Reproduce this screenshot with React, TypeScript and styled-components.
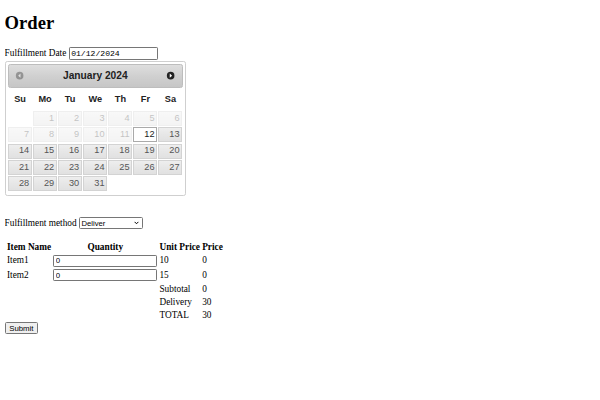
import React from 'react';
import styled, { createGlobalStyle } from 'styled-components';

const GlobalStyle = createGlobalStyle`
  body {
    margin: 4.6px;
    background: #fff;
    color: #000;
    font-family: 'Liberation Serif', 'Times New Roman', serif;
    font-size: 9.3px;
  }
`;

const Heading = styled.h1`
  margin: 7.6px 0 12.4px;
  font-size: 18.6px;
  font-weight: bold;
`;

const FieldRow = styled.div<{ $gap?: number }>`
  margin-top: ${({ $gap }) => $gap ?? 0}px;
  line-height: 12.6px;
`;

const TextInput = styled.input<{ $width: number; $mono?: boolean }>`
  box-sizing: border-box;
  width: ${({ $width }) => $width}px;
  height: 12.4px;
  padding: 0 1.5px;
  border: 1px solid #767676;
  border-radius: 1.2px;
  background: #fff;
  color: #000;
  font-family: ${({ $mono }) =>
    $mono ? "'Liberation Mono', 'Courier New', monospace" : "'Liberation Sans', Arial, sans-serif"};
  font-size: ${({ $mono }) => ($mono ? 8.1 : 7.9)}px;
  vertical-align: middle;
  outline: none;
`;

const Picker = styled.div`
  width: 175.4px;
  margin-top: 1.2px;
  padding: 2px 2px 0;
  border: 1px solid #cfcfcf;
  border-radius: 2.3px;
  background: #fff;
  color: #222;
  font-family: 'Liberation Sans', Arial, sans-serif;
  font-size: 10.2px;
`;

const PickerHeader = styled.div`
  position: relative;
  padding: 2px 0;
  border: 1px solid #bdbdbd;
  border-radius: 2.3px;
  background: linear-gradient(to bottom, #dedede 0%, #d0d0d0 50%, #c6c6c6 100%);
  color: #222;
  font-weight: bold;
`;

const PickerTitle = styled.div`
  margin: 0 23.5px;
  line-height: 18.2px;
  text-align: center;
`;

const NavButton = styled.span<{ $side: 'left' | 'right'; $disabled?: boolean }>`
  position: absolute;
  top: 2px;
  ${({ $side }) => $side}: 2px;
  width: 18.4px;
  height: 18.4px;
  display: flex;
  align-items: center;
  justify-content: center;
  opacity: ${({ $disabled }) => ($disabled ? 0.35 : 1)};
`;

const Calendar = styled.table`
  width: 100%;
  margin: 0 0 3.4px;
  border-collapse: collapse;
  font-size: 9.2px;
`;

const DayName = styled.th`
  padding: 6.3px 1.8px;
  border: 0;
  font-weight: bold;
  text-align: center;
`;

const DayCell = styled.td<{ $disabled?: boolean }>`
  padding: 0.6px;
  border: 0;
  opacity: ${({ $disabled }) => ($disabled ? 0.35 : 1)};
`;

const Day = styled.span<{ $active?: boolean }>`
  display: block;
  padding: 1.8px;
  line-height: 9.4px;
  text-align: right;
  border: 1px solid ${({ $active }) => ($active ? '#aaaaaa' : '#d3d3d3')};
  background: ${({ $active }) =>
    $active ? '#ffffff' : 'linear-gradient(to bottom, #eeeeee 0%, #e6e6e6 55%, #e1e1e1 100%)'};
  color: ${({ $active }) => ($active ? '#212121' : '#555555')};
`;

const SelectWrap = styled.span`
  position: relative;
  display: inline-block;
  vertical-align: middle;
`;

const Select = styled.select`
  box-sizing: border-box;
  width: 64px;
  height: 12px;
  padding: 0 0 0 1.5px;
  border: 1px solid #767676;
  border-radius: 1.5px;
  background: #fff;
  color: #000;
  font-family: 'Liberation Sans', Arial, sans-serif;
  font-size: 7.7px;
  appearance: none;
  outline: none;
  display: block;
`;

const Chevron = styled.svg`
  position: absolute;
  right: 4px;
  top: 4px;
  pointer-events: none;
`;

const OrderTable = styled.table`
  margin: 10.5px 0 0 0.8px;
  border-spacing: 1.16px;
  line-height: 10.8px;

  th,
  td {
    padding: 0.58px;
  }
`;

const HeadCell = styled.th`
  font-weight: bold;
  text-align: center;
`;

const Cell = styled.td`
  text-align: left;
`;

const SubmitButton = styled.button`
  margin-top: 0;
  padding: 0.8px 3.6px;
  border: 1px solid #767676;
  border-radius: 1.5px;
  background: #efefef;
  color: #000;
  font-family: 'Liberation Sans', Arial, sans-serif;
  font-size: 7.8px;
  line-height: 9px;
`;

const CircleTriangle: React.FC<{ dir: 'w' | 'e' }> = ({ dir }) => (
  <svg width="9.3" height="9.3" viewBox="0 0 16 16">
    <circle cx="8" cy="8" r="6.5" fill="#222" />
    {dir === 'e' ? (
      <polygon points="6.5,4.5 10.5,8 6.5,11.5" fill="#fff" />
    ) : (
      <polygon points="9.5,4.5 5.5,8 9.5,11.5" fill="#fff" />
    )}
  </svg>
);

const weeks: (number | null)[][] = [
  [null, 1, 2, 3, 4, 5, 6],
  [7, 8, 9, 10, 11, 12, 13],
  [14, 15, 16, 17, 18, 19, 20],
  [21, 22, 23, 24, 25, 26, 27],
  [28, 29, 30, 31, null, null, null],
];

const dayNames = ['Su', 'Mo', 'Tu', 'We', 'Th', 'Fr', 'Sa'];

const items = [
  { name: 'Item1', unit: 10 },
  { name: 'Item2', unit: 15 },
];

export default function App() {
  const selected = 12;

  return (
    <>
      <GlobalStyle />
      <Heading>Order</Heading>

      <FieldRow>
        Fulfillment Date <TextInput $width={89} $mono defaultValue="01/12/2024" />
      </FieldRow>

      <Picker>
        <PickerHeader>
          <NavButton $side="left" $disabled>
            <CircleTriangle dir="w" />
          </NavButton>
          <NavButton $side="right">
            <CircleTriangle dir="e" />
          </NavButton>
          <PickerTitle>January 2024</PickerTitle>
        </PickerHeader>
        <Calendar>
          <thead>
            <tr>
              {dayNames.map((d) => (
                <DayName key={d}>{d}</DayName>
              ))}
            </tr>
          </thead>
          <tbody>
            {weeks.map((week, i) => (
              <tr key={i}>
                {week.map((day, j) =>
                  day === null ? (
                    <DayCell key={j} />
                  ) : (
                    <DayCell key={j} $disabled={day < selected}>
                      <Day $active={day === selected}>{day}</Day>
                    </DayCell>
                  ),
                )}
              </tr>
            ))}
          </tbody>
        </Calendar>
      </Picker>

      <FieldRow $gap={20.7}>
        Fulfillment method{' '}
        <SelectWrap>
          <Select defaultValue="deliver">
            <option value="deliver">Deliver</option>
            <option value="pickup">Pickup</option>
          </Select>
          <Chevron width="5" height="4" viewBox="0 0 10 7">
            <polyline points="1.2,1.2 5,5 8.8,1.2" fill="none" stroke="#000" strokeWidth="2" />
          </Chevron>
        </SelectWrap>
      </FieldRow>

      <OrderTable>
        <thead>
          <tr>
            <HeadCell>Item Name</HeadCell>
            <HeadCell>Quantity</HeadCell>
            <HeadCell>Unit Price</HeadCell>
            <HeadCell>Price</HeadCell>
          </tr>
        </thead>
        <tbody>
          {items.map((item) => (
            <tr key={item.name}>
              <Cell>{item.name}</Cell>
              <Cell>
                <TextInput $width={104} defaultValue="0" />
              </Cell>
              <Cell>{item.unit}</Cell>
              <Cell>0</Cell>
            </tr>
          ))}
          <tr>
            <Cell />
            <Cell />
            <Cell>Subtotal</Cell>
            <Cell>0</Cell>
          </tr>
          <tr>
            <Cell />
            <Cell />
            <Cell>Delivery</Cell>
            <Cell>30</Cell>
          </tr>
          <tr>
            <Cell />
            <Cell />
            <Cell>TOTAL</Cell>
            <Cell>30</Cell>
          </tr>
        </tbody>
      </OrderTable>

      <SubmitButton type="button">Submit</SubmitButton>
    </>
  );
}
